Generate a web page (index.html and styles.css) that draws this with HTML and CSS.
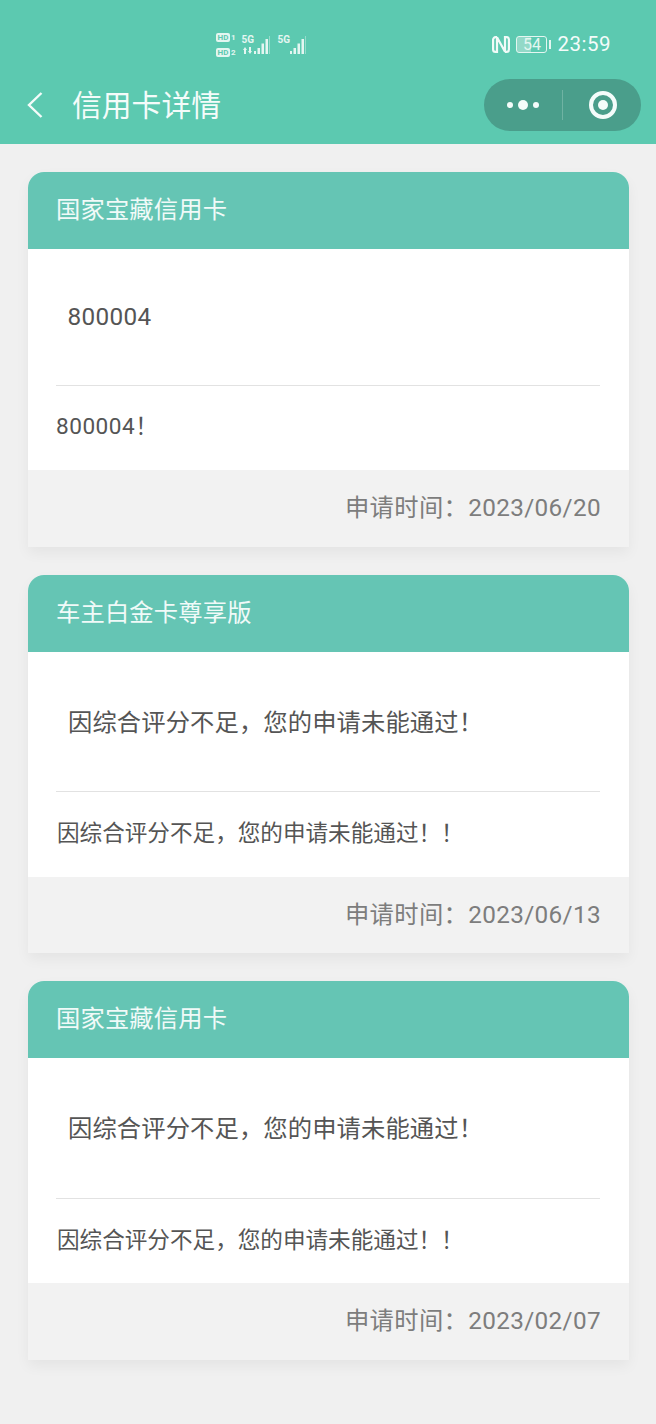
FILE: index.html
```html
<!DOCTYPE html>
<html lang="zh-CN">
<head>
    <meta charset="UTF-8">
    <meta name="viewport" content="width=device-width, initial-scale=1.0">
    <title>信用卡详情</title>
    <link rel="stylesheet" href="styles.css">
</head>
<body>
    <!-- 顶部 -->
    <div class="top">
        <div class="status">
            <div class="signals">
                <div class="hd-col">
                    <div class="hd-row"><span class="hd">HD</span><span class="sim">1</span></div>
                    <div class="hd-row"><span class="hd">HD</span><span class="sim">2</span></div>
                </div>
                <div class="net">
                    <span class="net-label">5G</span>
                    <svg class="arrows" viewBox="0 0 10 7"><path fill="#e4f6f1" d="M1 7V3H0l2-3 2 3H3v4zM6 0v4H5l2 3 2-3H8V0z"/></svg>
                    <svg class="bars" viewBox="0 0 16 19"><path fill="#e4f6f1" d="M0 15h2v3H0zM3.500 12H6v6H3.500zM7.500 7.500H10V18H7.500zM11.500 3H14v15h-2.500z"/><path fill="#a6e0d2" d="M15.200 0h.8v18h-.8z"/></svg>
                </div>
                <div class="net net-2">
                    <span class="net-label">5G</span>
                    <svg class="bars" viewBox="0 0 16 19"><path fill="#e4f6f1" d="M0 15h2v3H0zM3.500 12H6v6H3.500zM7.500 7.500H10V18H7.500zM11.500 3H14v15h-2.500z"/><path fill="#a6e0d2" d="M15.200 0h.8v18h-.8z"/></svg>
                </div>
            </div>
            <div class="status-right">
                <svg class="nfc" viewBox="0 0 18 17"><path fill="none" stroke="#f1fbf8" stroke-width="2.200" d="M5 1.200H3.500a2.400 2.400 0 0 0-2.400 2.400v9.800a2.400 2.400 0 0 0 2.400 2.400H5V1.200l8 14.600V1.200h1.500a2.400 2.400 0 0 1 2.400 2.400v9.800a2.400 2.400 0 0 1-2.400 2.400H13"/></svg>
                <div class="battery"><span class="battery-num">54</span></div>
                <span class="battery-cap"></span>
                <span class="clock">23:59</span>
            </div>
        </div>
        <div class="nav">
            <svg class="back" viewBox="0 0 16 26"><path fill="none" stroke="#f4fcfa" stroke-width="2.400" d="M14.500 1 2 13l12.500 12"/></svg>
            <span class="nav-title">信用卡详情</span>
            <div class="capsule">
                <div class="capsule-dots"><i class="dot"></i><i class="dot dot-big"></i><i class="dot"></i></div>
                <div class="capsule-line"></div>
                <div class="capsule-rec"><i class="rec-inner"></i></div>
            </div>
        </div>
    </div>

    <!-- 卡片列表 -->
    <div class="list">
        <div class="card">
            <div class="card-head">国家宝藏信用卡</div>
            <div class="card-body">
                <div class="card-title card-title-num">800004</div>
                <div class="card-desc card-desc-num">800004！</div>
            </div>
            <div class="card-foot">申请时间：2023/06/20</div>
        </div>
        <div class="card">
            <div class="card-head">车主白金卡尊享版</div>
            <div class="card-body">
                <div class="card-title">因综合评分不足，您的申请未能通过！</div>
                <div class="card-desc">因综合评分不足，您的申请未能通过！！</div>
            </div>
            <div class="card-foot">申请时间：2023/06/13</div>
        </div>
        <div class="card">
            <div class="card-head">国家宝藏信用卡</div>
            <div class="card-body">
                <div class="card-title">因综合评分不足，您的申请未能通过！</div>
                <div class="card-desc">因综合评分不足，您的申请未能通过！！</div>
            </div>
            <div class="card-foot">申请时间：2023/02/07</div>
        </div>
    </div>
</body>
</html>
```

FILE: styles.css
```css
body {
    margin: 0;
    height: 1424px;
    overflow: hidden;
    background: #f0f0f0;
    font-family: Roboto, "Noto Sans CJK SC", sans-serif;
}

.top {
    height: 144px;
    background: #5cc9b0;
    color: #f4fcfa;
}

.status {
    height: 72px;
    display: flex;
    justify-content: space-between;
    padding: 17px 45px 0 216px;
    box-sizing: border-box;
    align-items: center;
}

.signals {
    display: flex;
    align-items: center;
    gap: 5px;
}

.hd-col {
    display: flex;
    flex-direction: column;
    gap: 5px;
}

.hd-row {
    display: flex;
    align-items: center;
    gap: 1px;
    height: 10px;
}

.hd {
    width: 14px;
    height: 9px;
    background: #e4f6f1;
    color: #5cc9b0;
    font-size: 8px;
    line-height: 9px;
    font-weight: 700;
    text-align: center;
    border-radius: 2px;
}

.sim {
    font-size: 8px;
    font-weight: 700;
    color: #e4f6f1;
}

.net {
    width: 29px;
    height: 20px;
    position: relative;
}

.net-2 {
    margin-left: 2px;
}

.net-label {
    position: absolute;
    left: 1px;
    top: 0;
    font-size: 10px;
    line-height: 10px;
    font-weight: 700;
    color: #e4f6f1;
}

.arrows {
    position: absolute;
    left: 2px;
    bottom: 1px;
    width: 10px;
    height: 7px;
}

.bars {
    position: absolute;
    right: 0;
    top: 1px;
    width: 16px;
    height: 19px;
}

.status-right {
    display: flex;
    align-items: center;
}

.nfc {
    width: 18px;
    height: 17px;
}

.battery {
    width: 31px;
    height: 17px;
    margin-left: 6px;
    border: 1.500px solid #e4f6f1;
    border-radius: 3px;
    box-sizing: border-box;
    display: flex;
    align-items: center;
    justify-content: center;
    background: linear-gradient(90deg, #93d9c8 50%, transparent 50%);
}

.battery-num {
    font-size: 16px;
    line-height: 14px;
    color: #e4f6f1;
}

.battery-cap {
    width: 2px;
    height: 9px;
    margin-left: 2px;
    background: #e4f6f1;
}

.clock {
    font-size: 20.500px;
    margin-left: 6px;
    margin-top: -2px;
    letter-spacing: 0.500px;
}

.nav {
    height: 72px;
    display: flex;
    align-items: center;
    padding: 0 15px 6px 27px;
    box-sizing: border-box;
}

.back {
    width: 16px;
    height: 26px;
}

.nav-title {
    font-size: 29.800px;
    margin-left: 29px;
    margin-top: -4px;
}

.capsule {
    margin-left: auto;
    width: 157px;
    height: 52px;
    border-radius: 26px;
    background: #4a9e8b;
    display: flex;
    align-items: center;
}

.capsule-dots {
    width: 78px;
    display: flex;
    align-items: center;
    justify-content: center;
    gap: 5px;
}

.dot {
    width: 6px;
    height: 6px;
    border-radius: 50%;
    background: #f4fcfa;
}

.dot-big {
    width: 10px;
    height: 10px;
}

.capsule-line {
    width: 1px;
    height: 30px;
    background: #6fb3a3;
}

.capsule-rec {
    width: 28px;
    height: 28px;
    margin-left: 26px;
    border: 4px solid #f4fcfa;
    border-radius: 50%;
    box-sizing: border-box;
    display: flex;
    align-items: center;
    justify-content: center;
}

.rec-inner {
    width: 10px;
    height: 10px;
    border-radius: 50%;
    background: #f4fcfa;
}

.list {
    padding: 28px 27px 0 28px;
    display: flex;
    flex-direction: column;
    gap: 28px;
}

.card {
    border-radius: 16px 16px 0 0;
    box-shadow: 0 6px 14px rgba(0,0,0,0.05);
    background: #fff;
    overflow: hidden;
}

.card-head {
    height: 77px;
    line-height: 75px;
    padding-left: 28px;
    background: #65c5b4;
    color: #f0faf8;
    font-size: 24.300px;
    letter-spacing: 0.150px;
}

.card-body {
    padding: 0 29px 0 28px;
}

.card-title {
    height: 140.500px;
    line-height: 142px;
    padding-left: 12px;
    font-size: 24.300px;
    letter-spacing: 0.120px;
    color: #555;
    border-bottom: 1px solid #e2e2e2;
    box-sizing: border-box;
}

.card-title-num {
    height: 136.500px;
    line-height: 136px;
    padding-left: 11.500px;
    letter-spacing: 0.350px;
}

.card-desc {
    height: 84.500px;
    line-height: 83px;
    padding-left: 1px;
    font-size: 22.600px;
    color: #555;
}

.card-desc-num {
    padding-left: 0;
    line-height: 82px;
    letter-spacing: 0.500px;
}

.card-foot {
    height: 76.500px;
    line-height: 75px;
    text-align: right;
    padding-right: 28px;
    background: #f2f2f2;
    color: #7d7d7d;
    font-size: 24.300px;
    letter-spacing: 0.350px;
}
```
